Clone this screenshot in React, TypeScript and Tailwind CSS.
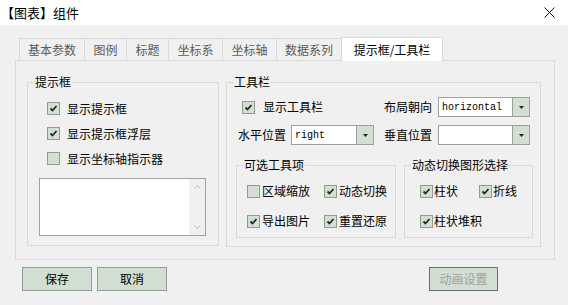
import React from "react";

const FONT = { fontFamily: '"Noto Sans CJK SC", "Noto Sans", sans-serif' };

function Check({ checked }: { checked: boolean }) {
  return (
    <span className="w-[13px] h-[13px] border border-[#8f9c8f] bg-[#d3dfd3] flex items-center justify-center shrink-0">
      {checked && (
        <svg width="9" height="9" viewBox="0 0 9 9">
          <path d="M1.5 4.5 L3.5 6.5 L7.5 2" stroke="#1d2d1d" strokeWidth="1.8" fill="none" />
        </svg>
      )}
    </span>
  );
}

function CB({ checked, label, gap = "gap-[7px]" }: { checked: boolean; label: string; gap?: string }) {
  return (
    <div className={`flex items-center ${gap}`}>
      <Check checked={checked} />
      <span className="text-[12px] leading-[14px] text-black whitespace-nowrap">{label}</span>
    </div>
  );
}

function Select({ value, w }: { value: string; w: string }) {
  return (
    <div className={`${w} h-[20px] border border-[#9aa39a] bg-white flex`}>
      <div
        className="flex-1 flex items-center pl-[3px] text-[10px] text-black"
        style={{ fontFamily: '"Liberation Mono", monospace' }}
      >
        {value}
      </div>
      <div className="w-[17px] h-full bg-[#d3dfd3] border-l border-[#9aa39a] flex items-center justify-center">
        <svg width="5" height="3" viewBox="0 0 5 3">
          <path d="M0 0 H5 L2.5 3 Z" fill="#222" />
        </svg>
      </div>
    </div>
  );
}

function Group({ label, className, children }: { label: string; className?: string; children: React.ReactNode }) {
  return (
    <fieldset className={`border border-[#d8d8d8] ${className ?? ""}`}>
      <legend className="ml-[6px] px-[1px] text-[12px] leading-[16px] text-black">{label}</legend>
      {children}
    </fieldset>
  );
}

const tabs: { t: string; w: string }[] = [
  { t: "基本参数", w: "w-[66px]" },
  { t: "图例", w: "w-[43px]" },
  { t: "标题", w: "w-[43px]" },
  { t: "坐标系", w: "w-[55px]" },
  { t: "坐标轴", w: "w-[55px]" },
  { t: "数据系列", w: "w-[66px]" },
];

export default function App() {
  return (
    <div className="w-[568px] h-[305px] bg-[#f0f0f0] overflow-hidden" style={FONT}>
      {/* title bar */}
      <div className="h-[25px] bg-white flex items-center justify-between pl-[1px] pr-[13px]">
        <span className="text-[13px] leading-[16px] text-black">【图表】组件</span>
        <svg width="11" height="11" viewBox="0 0 11 11">
          <path d="M0.5 0.5 L10.5 10.5 M10.5 0.5 L0.5 10.5" stroke="#111" strokeWidth="1" />
        </svg>
      </div>

      {/* tabs */}
      <div className="pl-[15px] pr-[13px] mt-[12px]">
        <div className="flex items-end pl-[4px] h-[24px] relative z-10">
          {tabs.map((tb, i) => (
            <div
              key={tb.t}
              className={`${tb.w} h-[22px] ${i === 0 ? "" : "-ml-px"} border-t border-l border-r border-[#d9d9d9] bg-[#f0f0f0] flex items-center justify-center text-[12px] text-[#5a5a5a] mb-px`}
            >
              {tb.t}
            </div>
          ))}
          <div className="w-[102px] h-[24px] -ml-px border-t border-l border-r border-[#d9d9d9] bg-white flex items-center justify-center text-[12px] text-black">
            提示框/工具栏
          </div>
        </div>

        {/* panel */}
        <div className="h-[200px] -mt-px border border-[#d9d9d9] bg-[#f0f0f0] flex pl-[11px] pt-[13px] gap-[7px]">
          <Group label="提示框" className="w-[192px] h-[172px]">
            <div className="pt-[6px] pl-[19px]">
              <div className="h-[25px] flex items-center"><CB checked label="显示提示框" /></div>
              <div className="h-[25px] flex items-center"><CB checked label="显示提示框浮层" /></div>
              <div className="h-[25px] flex items-center"><CB checked={false} label="显示坐标轴指示器" /></div>
            </div>
            <div className="ml-[11px] mt-[7px] w-[167px] h-[58px] border border-[#a0a0a0] bg-white flex justify-end">
              <div className="w-[16px] h-full bg-[#f0f0f0] flex flex-col items-center justify-between py-[6px]">
                <svg width="7" height="4" viewBox="0 0 7 4">
                  <path d="M0.5 3.5 L3.5 0.5 L6.5 3.5" stroke="#bdbdbd" fill="none" />
                </svg>
                <svg width="7" height="4" viewBox="0 0 7 4">
                  <path d="M0.5 0.5 L3.5 3.5 L6.5 0.5" stroke="#bdbdbd" fill="none" />
                </svg>
              </div>
            </div>
          </Group>

          <Group label="工具栏" className="w-[315px] h-[173px]">
            <div className="pt-[7px] pl-[0px] grid grid-cols-[157px_1fr] gap-y-[8px]">
              <div className="h-[20px] flex items-center pl-[15px]">
                <CB checked label="显示工具栏" gap="gap-[8px]" />
              </div>
              <div className="h-[20px] flex items-center gap-[6px]">
                <span className="text-[12px] text-black">布局朝向</span>
                <Select value="horizontal" w="w-[92px]" />
              </div>
              <div className="h-[20px] flex items-center pl-[11px] gap-[5px]">
                <span className="text-[12px] text-black">水平位置</span>
                <Select value="right" w="w-[83px]" />
              </div>
              <div className="h-[20px] flex items-center gap-[6px]">
                <span className="text-[12px] text-black">垂直位置</span>
                <Select value="" w="w-[92px]" />
              </div>
            </div>
            <div className="flex gap-[8px] pl-[9px] mt-[12px]">
              <Group label="可选工具项" className="w-[160px] h-[81px]">
                <div className="grid grid-cols-[77px_1fr] gap-y-[10px] pl-[10px] pt-[8px]">
                  <div className="h-[20px] flex items-center"><CB checked={false} label="区域缩放" gap="gap-[2px]" /></div>
                  <div className="h-[20px] flex items-center"><CB checked label="动态切换" gap="gap-[2px]" /></div>
                  <div className="h-[20px] flex items-center"><CB checked label="导出图片" gap="gap-[2px]" /></div>
                  <div className="h-[20px] flex items-center"><CB checked label="重置还原" gap="gap-[2px]" /></div>
                </div>
              </Group>
              <Group label="动态切换图形选择" className="w-[129px] h-[81px]">
                <div className="grid grid-cols-[59px_1fr] gap-y-[10px] pl-[15px] pt-[8px]">
                  <div className="h-[20px] flex items-center"><CB checked label="柱状" gap="gap-[1px]" /></div>
                  <div className="h-[20px] flex items-center"><CB checked label="折线" gap="gap-[1px]" /></div>
                  <div className="h-[20px] flex items-center col-span-2"><CB checked label="柱状堆积" gap="gap-[1px]" /></div>
                </div>
              </Group>
            </div>
          </Group>
        </div>
      </div>

      {/* buttons */}
      <div className="flex items-center pl-[22px] pr-[70px] mt-[7px]">
        <button className="w-[70px] h-[24px] border border-[#939d93] bg-[#d1dfd2] text-[12px] text-black">保存</button>
        <button className="ml-[5px] w-[70px] h-[24px] border border-[#939d93] bg-[#d1dfd2] text-[12px] text-black">取消</button>
        <div className="flex-1" />
        <button className="w-[69px] h-[24px] border border-[#6a6f6a] bg-[#d1dfd2] text-[12px] text-[#a0a0a0]">动画设置</button>
      </div>
    </div>
  );
}
